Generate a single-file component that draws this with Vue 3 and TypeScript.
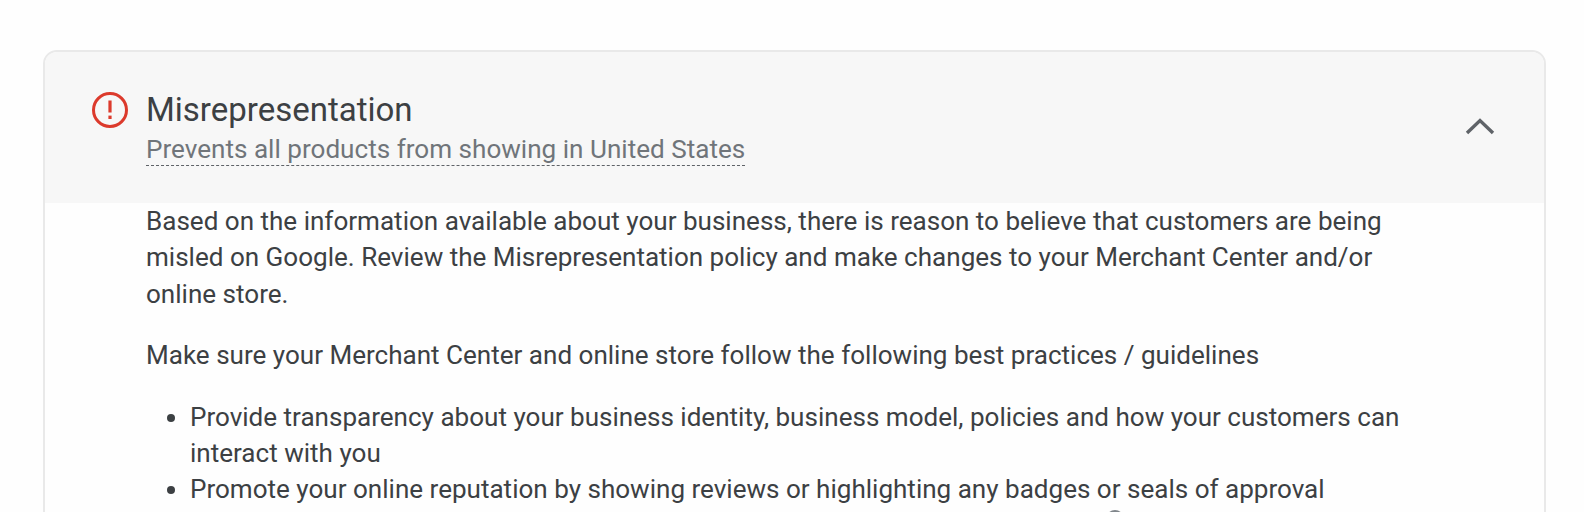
<template>
  <main class="page">
    <section class="card">
      <header class="card__head">
        <svg class="card__alert" viewBox="0 0 38 38" aria-hidden="true">
          <circle cx="19" cy="19" r="16.5" fill="none" stroke="#dc3a2c" stroke-width="3" />
          <rect x="17.4" y="9.5" width="3.2" height="12" fill="#dc3a2c" />
          <rect x="17.4" y="24.6" width="3.2" height="3.4" fill="#dc3a2c" />
        </svg>
        <div class="card__titles">
          <h2 class="card__title">{{ title }}</h2>
          <span class="card__sub">{{ subtitle }}</span>
        </div>
        <svg class="card__chevron" viewBox="0 0 30 18" aria-hidden="true">
          <path d="M2 16 L15 3.5 L28 16" fill="none" stroke="#5f6368" stroke-width="3.4" />
        </svg>
      </header>
      <div class="card__body">
        <p class="card__intro">{{ intro }}</p>
        <p class="card__lead">{{ lead }}</p>
        <ul class="card__list">
          <li v-for="item in practices" :key="item">{{ item }}</li>
        </ul>
      </div>
      <span class="card__hint" aria-hidden="true"></span>
    </section>
  </main>
</template>

<script setup lang="ts">
const title = 'Misrepresentation'
const subtitle = 'Prevents all products from showing in United States'
const intro =
  'Based on the information available about your business, there is reason to believe that customers are being misled on Google. Review the Misrepresentation policy and make changes to your Merchant Center and/or online store.'
const lead = 'Make sure your Merchant Center and online store follow the following best practices / guidelines'
const practices: string[] = [
  'Provide transparency about your business identity, business model, policies and how your customers can interact with you',
  'Promote your online reputation by showing reviews or highlighting any badges or seals of approval',
]
</script>

<style>
html,
body {
  margin: 0;
  background: #fefefe;
}
</style>

<style scoped>
.page {
  height: 512px;
  overflow: hidden;
  box-sizing: border-box;
  padding: 50px 38px 0 43px;
  font-family: Roboto, "Liberation Sans", sans-serif;
}

.card {
  position: relative;
  border: 2px solid #e9e9e9;
  border-radius: 14px 14px 0 0;
  background: #fefefe;
  min-height: 600px;
}

.card__head {
  display: flex;
  align-items: flex-start;
  height: 151px;
  box-sizing: border-box;
  padding: 38px 49px 0 46px;
  background: #f7f7f7;
  border-radius: 12px 12px 0 0;
}

.card__alert {
  flex-shrink: 0;
  width: 38px;
  height: 38px;
  margin-top: 1px;
  margin-right: 17px;
}

.card__titles {
  display: flex;
  flex-direction: column;
  align-items: flex-start;
  flex: 1;
}

.card__title {
  margin: 0;
  font-size: 33px;
  font-weight: 400;
  line-height: 40px;
  color: #3c4043;
}

.card__sub {
  margin-top: 3px;
  font-size: 26.1px;
  line-height: 32px;
  color: #70757a;
  border-bottom: 1.5px dashed #5f6368;
}

.card__chevron {
  flex-shrink: 0;
  width: 30px;
  height: 18px;
  margin-top: 27px;
}

.card__body {
  padding: 0 130px 0 101px;
  font-size: 26.05px;
  line-height: 36.3px;
  color: #3c4043;
}

.card__intro {
  margin: 0;
}

.card__lead {
  margin: 25px 0 0;
}

.card__list {
  margin: 25.5px 0 0;
  padding: 0 0 0 44px;
}

/* top of something cut off by the bottom edge */
.card__hint {
  position: absolute;
  left: 1061px;
  top: 458px;
  width: 14px;
  height: 14px;
  border: 2px solid #80868b;
  border-radius: 50%;
}
</style>
